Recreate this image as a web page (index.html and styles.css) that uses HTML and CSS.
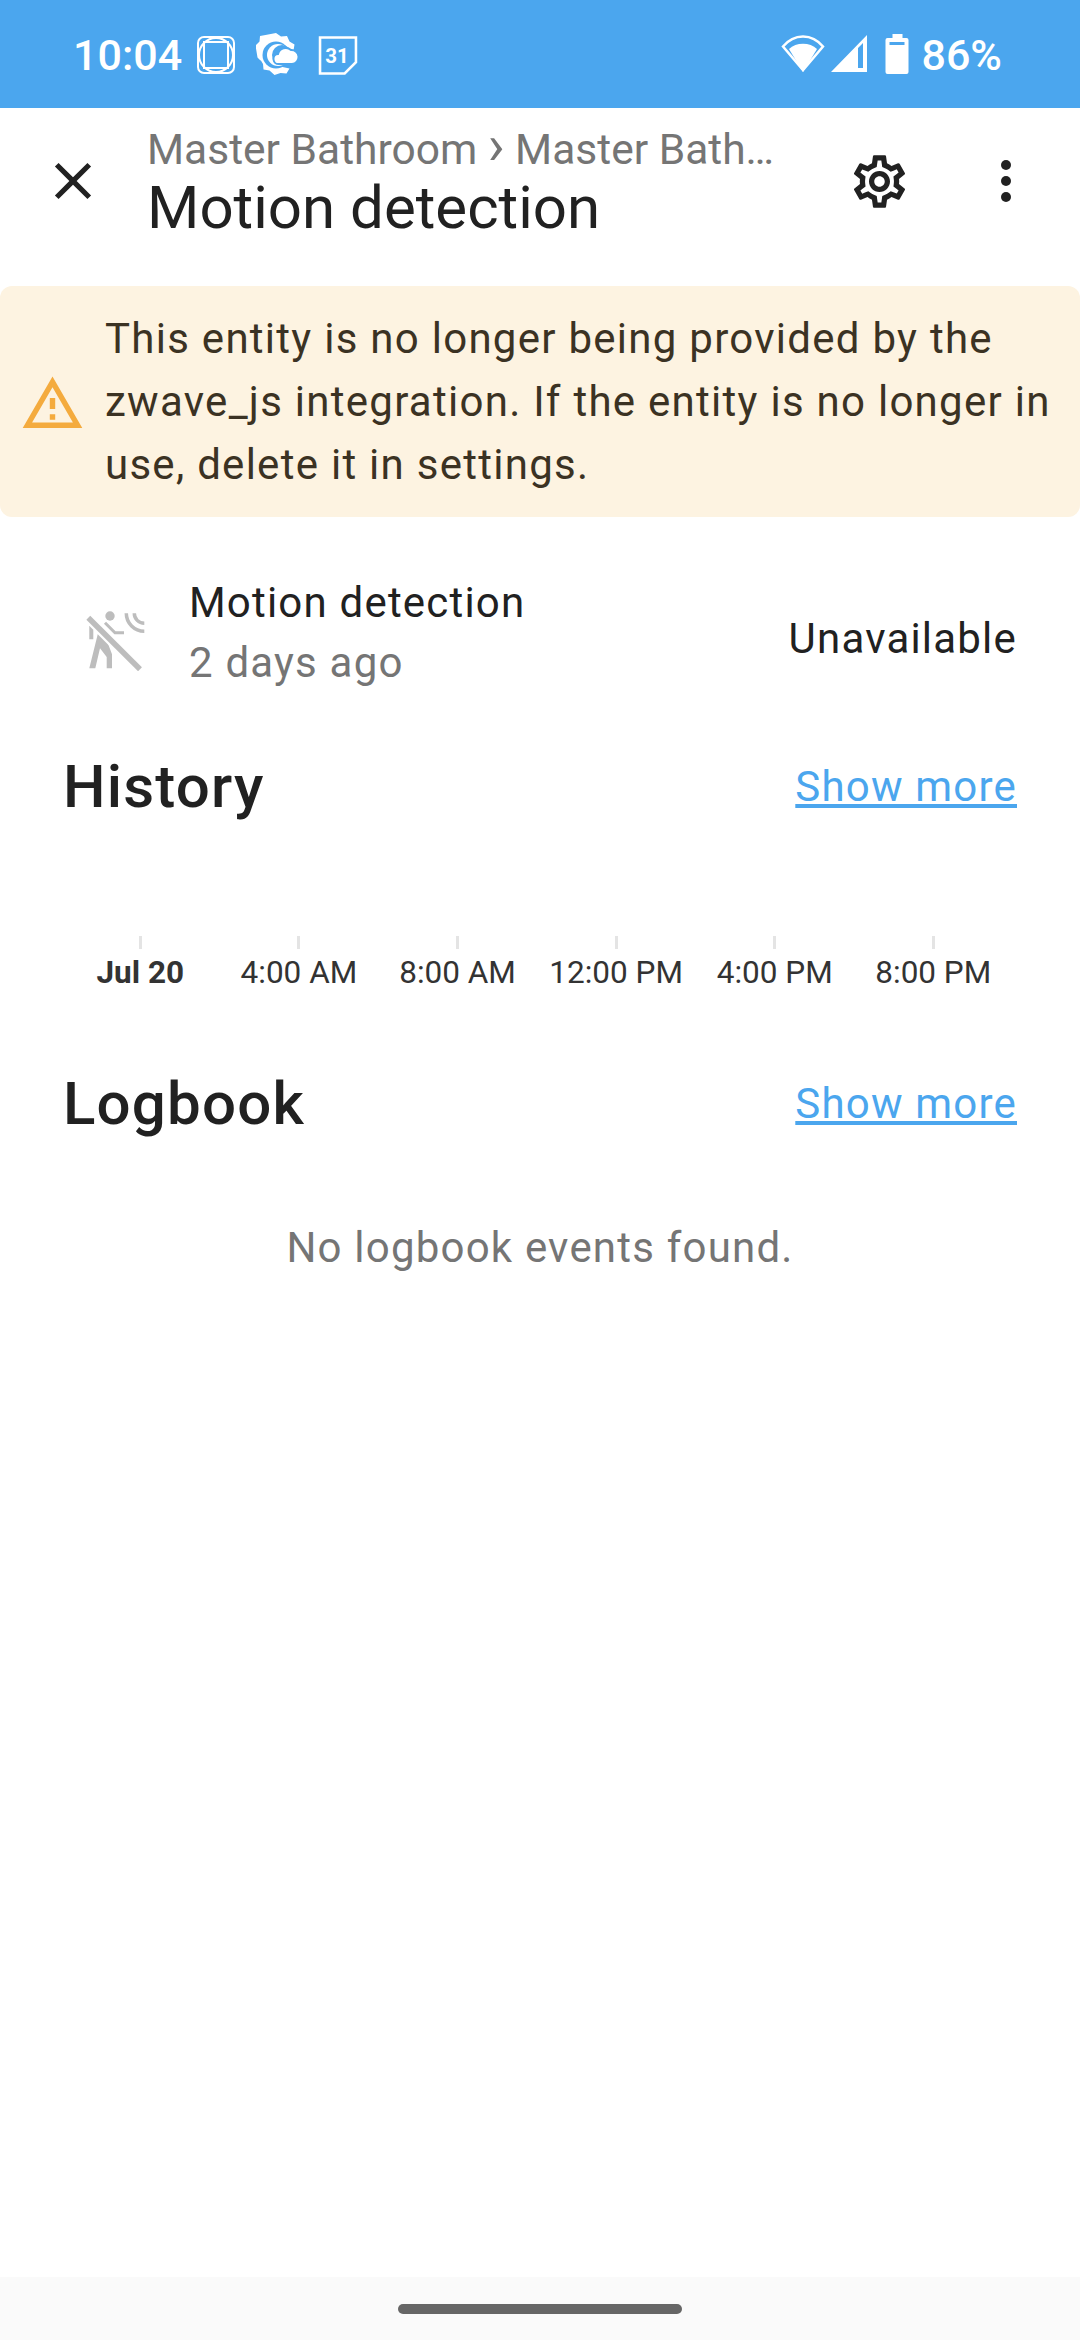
FILE: index.html
```html
<!DOCTYPE html>
<html>
<head>
<meta name="viewport" content="width=device-width, initial-scale=1.0"/>
<title>Motion detection</title>
<link rel="stylesheet" href="styles.css">
</head>
<body>
<div class="page">
  <div class="statusbar">
    <span class="clock">10:04</span>
    <svg class="st-square" width="38" height="38" viewBox="0 0 38 38" fill="none" stroke="#fff" stroke-width="2">
      <rect x="1" y="1" width="36" height="36" rx="6"/>
      <rect x="7" y="6" width="24" height="26"/>
      <circle cx="19" cy="19" r="17"/>
    </svg>
    <svg class="st-weather" width="42" height="44" viewBox="0 0 42 44">
      <path fill="#fff" d="M20 0l5 3.500 6-.5 2.500 5.500 5 3-1 6-13 0-20 10-3-3-1-6-1-6 4-4 .5-5.500 5.500-1z"/>
      <path fill="#fff" d="M5 20l-1 6 3 5 .5 5.500 6 1 5 4.500 6-2 6 .5 3-5-14-3z"/>
      <circle cx="20" cy="22" r="13.500" fill="#4ba6ee"/>
      <circle cx="22" cy="22" r="11" fill="#fff"/>
      <circle cx="26" cy="22" r="10" fill="#4ba6ee"/>
      <path fill="#fff" stroke="#4ba6ee" stroke-width="2" d="M23 31a5 5 0 0 1-1-10 8 8 0 0 1 13-4 7 7 0 0 1 1 14z"/>
    </svg>
    <svg class="st-cal" width="40" height="39" viewBox="0 0 38 38" fill="none">
      <path stroke="#fff" stroke-width="2.500" d="M1.500 1.500h35v24l-11 11h-24z"/>
      <text x="18" y="26" text-anchor="middle" class="cal-num">31</text>
    </svg>
    <span class="grow"></span>
    <svg class="st-wifi" width="44" height="38" viewBox="0 0 44 38">
      <path fill="none" stroke="#fff" stroke-width="2.500" d="M2 12.500C13 -1 31 -1 42 12.500L22 36z"/>
      <path fill="#fff" d="M8 15C15 8 29 8 36 15L22 38z"/>
    </svg>
    <svg class="st-signal" width="36" height="37" viewBox="0 0 36 37">
      <path fill="#fff" fill-rule="evenodd" d="M0 37L36 0V37zM27 13V33H32V8z"/>
    </svg>
    <svg class="st-battery" width="24" height="40" viewBox="0 0 23 40">
      <path fill="#fff" fill-rule="evenodd" d="M7 0H17V4H21a2 2 0 0 1 2 2V38a2 2 0 0 1-2 2H2a2 2 0 0 1-2-2V6a2 2 0 0 1 2-2H7zM4 8V11H19V8z"/>
    </svg>
    <span class="pct">86%</span>
  </div>

  <div class="topbar">
    <svg class="ic-close" width="62" height="62" viewBox="0 0 24 24">
      <path fill="#212121" d="M19,6.41L17.59,5L12,10.590L6.41,5L5,6.41L10.590,12L5,17.590L6.41,19L12,13.41L17.590,19L19,17.590L13.41,12L19,6.41Z"/>
    </svg>
    <div class="titles">
      <div class="crumb">Master Bathroom <span class="chev">&rsaquo;</span> Master Bath&hellip;</div>
      <div class="title">Motion detection</div>
    </div>
    <svg class="ic-cog" width="63" height="63" viewBox="0 0 24 24">
      <path fill="#212121" d="M19.43 12.98c.04-.32.07-.64.07-.98 0-.34-.03-.66-.07-.98l2.11-1.65c.19-.15.24-.42.12-.64l-2-3.46c-.09-.16-.26-.25-.44-.25-.06 0-.12.01-.17.03l-2.49 1c-.52-.4-1.08-.73-1.69-.98l-.38-2.65C14.46 2.18 14.25 2 14 2h-4c-.25 0-.46.18-.49.42l-.38 2.65c-.61.25-1.17.59-1.69.98l-2.49-1c-.06-.02-.12-.03-.18-.03-.17 0-.34.09-.43.25l-2 3.46c-.13.22-.07.49.12.64l2.11 1.65c-.04.32-.07.65-.07.98 0 .33.03.66.07.98l-2.11 1.65c-.19.15-.24.42-.12.64l2 3.46c.09.16.26.25.44.25.06 0 .12-.01.17-.03l2.49-1c.52.4 1.08.73 1.69.98l.38 2.65c.03.24.24.42.49.42h4c.25 0 .46-.18.49-.42l.38-2.65c.61-.25 1.17-.59 1.69-.98l2.49 1c.06.02.12.03.18.03.17 0 .34-.09.43-.25l2-3.46c.12-.22.07-.49-.12-.64l-2.11-1.65zm-1.98-1.71c.04.31.05.52.05.73 0 .21-.02.43-.05.73l-.14 1.13.89.7 1.08.84-.7 1.21-1.27-.51-1.04-.42-.9.68c-.43.32-.84.56-1.25.73l-1.06.43-.16 1.13-.2 1.35h-1.4l-.19-1.35-.16-1.13-1.06-.43c-.43-.18-.83-.41-1.23-.71l-.91-.7-1.06.43-1.27.51-.7-1.21 1.08-.84.89-.7-.14-1.13c-.03-.31-.05-.54-.05-.74s.02-.43.05-.73l.14-1.13-.89-.7-1.08-.84.7-1.21 1.27.51 1.04.42.9-.68c.43-.32.84-.56 1.25-.73l1.06-.43.16-1.13.2-1.35h1.39l.19 1.35.16 1.13 1.06.43c.43.18.83.41 1.23.71l.91.7 1.06-.43 1.27-.51.7 1.21-1.07.85-.89.7.14 1.13zM12 8c-2.21 0-4 1.79-4 4s1.79 4 4 4 4-1.79 4-4-1.79-4-4-4zm0 6c-1.1 0-2-.9-2-2s.9-2 2-2 2 .9 2 2-.9 2-2 2z"/>
    </svg>
    <div class="dots"><span></span><span></span><span></span></div>
  </div>

  <div class="banner">
    <svg class="ic-warn" width="65" height="65" viewBox="0 0 24 24">
      <path fill="#f4ab3e" d="M12 5.990L19.530 19H4.470L12 5.990M12 2L1 21h22L12 2zm1 14h-2v2h2v-2zm0-6h-2v4h2v-4z"/>
    </svg>
    <div class="banner-text">This entity is no longer being provided by the zwave_js integration. If the entity is no longer in use, delete it in settings.</div>
  </div>

  <div class="entity">
    <svg class="ic-motion" width="60" height="60" viewBox="0 0 60 60" fill="none">
      <circle cx="24" cy="5" r="4.700" fill="#bdbdbd"/>
      <path fill="#bdbdbd" d="M13.300 17.300L20 21.700L21.300 30.700L26 43.300V57.300H20.700V46L14 37.300L9.300 57.300H3.300L11.300 25z"/>
      <path fill="#bdbdbd" d="M3.300 15H14V19H7.300V28.300H3.300z"/>
      <path stroke="#fff" stroke-width="10" d="M0 4.400L56 60.400"/>
      <path stroke="#bdbdbd" stroke-width="5.500" d="M2.300 6.700L54 58.300"/>
      <path stroke="#bdbdbd" stroke-width="3" d="M19 11.700L29 21.700H38"/>
      <path stroke="#bdbdbd" stroke-width="3.500" d="M40.300 2.300A18 18 0 0 0 58.300 20.300M48.300 2.300A10 10 0 0 0 58.300 12.300"/>
    </svg>
    <div class="entity-text">
      <div class="entity-name">Motion detection</div>
      <div class="entity-time">2 days ago</div>
    </div>
    <div class="entity-state">Unavailable</div>
  </div>

  <div class="section-head head-history">
    <span class="section-title">History</span>
    <a class="more">Show more</a>
  </div>
  <div class="axis">
    <div class="tick bold"><i></i><span>Jul 20</span></div>
    <div class="tick"><i></i><span>4:00 AM</span></div>
    <div class="tick"><i></i><span>8:00 AM</span></div>
    <div class="tick"><i></i><span>12:00 PM</span></div>
    <div class="tick"><i></i><span>4:00 PM</span></div>
    <div class="tick"><i></i><span>8:00 PM</span></div>
  </div>

  <div class="section-head head-logbook">
    <span class="section-title">Logbook</span>
    <a class="more">Show more</a>
  </div>
  <div class="empty">No logbook events found.</div>

  <div class="navbar"><div class="pill"></div></div>
</div>
</body>
</html>
```

FILE: styles.css
```css
html, body {
    margin: 0;
    padding: 0;
    background: #fff;
}

.page {
    width: 1080px;
    height: 2340px;
    display: flex;
    flex-direction: column;
    font-family: Roboto, "Liberation Sans", sans-serif;
    color: #212121;
}

.statusbar {
    height: 108px;
    flex: none;
    background: #4ba6ee;
    display: flex;
    align-items: center;
    padding: 0 78px 0 73px;
    color: #fff;
    font-size: 43px;
    font-weight: 500;
}

.statusbar svg {
    flex: none;
}

.clock {
    line-height: 108px;
    margin-top: 2px;
}

.st-square {
    margin-left: 15px;
    margin-top: 2px;
}

.st-weather {
    margin-left: 21px;
    margin-top: 2px;
}

.st-cal {
    margin-left: 20px;
    margin-top: 2px;
}

.cal-num {
    fill: #fff;
    font-family: Roboto, sans-serif;
    font-size: 20px;
    font-weight: 700;
}

.grow {
    flex: 1;
}

.st-wifi {
    margin-top: -2px;
}

.st-signal {
    margin-left: 6px;
    margin-top: -1px;
}

.st-battery {
    margin-left: 18px;
    margin-top: 0;
}

.pct {
    margin-left: 12px;
    line-height: 108px;
    margin-top: 2px;
}

.topbar {
    height: 178px;
    flex: none;
    display: flex;
    align-items: center;
    box-sizing: border-box;
    padding-bottom: 32px;
}

.ic-close {
    margin-left: 42px;
    flex: none;
}

.titles {
    margin-left: 43px;
    width: 640px;
    flex: none;
    margin-top: 4px;
}

.crumb {
    font-size: 42.500px;
    line-height: 50px;
    color: #757575;
    white-space: nowrap;
}

.chev {
    font-size: 56px;
    line-height: 0;
}

.title {
    font-size: 60px;
    line-height: 66px;
    color: #212121;
}

.ic-cog {
    margin-left: 61px;
    flex: none;
}

.dots {
    margin-left: 90px;
    display: flex;
    flex-direction: column;
    gap: 6px;
}

.dots span {
    width: 10px;
    height: 10px;
    border-radius: 50%;
    background: #212121;
}

.banner {
    height: 231px;
    flex: none;
    background: #fdf3e1;
    border-radius: 12px;
    display: flex;
    align-items: center;
    box-sizing: border-box;
    padding-left: 20px;
}

.ic-warn {
    flex: none;
    margin-top: 3px;
}

.banner-text {
    margin-left: 20px;
    width: 950px;
    font-size: 42px;
    line-height: 63px;
    letter-spacing: 1.270px;
    color: #3b3223;
}

.entity {
    height: 124px;
    margin-top: 60px;
    flex: none;
    display: flex;
    align-items: center;
}

.ic-motion {
    margin-left: 86px;
    flex: none;
    margin-top: 4px;
}

.entity-text {
    margin-left: 43px;
    margin-top: -12px;
}

.entity-name,
.entity-time {
    font-size: 42px;
    line-height: 60px;
    letter-spacing: 1.200px;
}

.entity-time {
    color: #757575;
}

.entity-state {
    margin-left: auto;
    margin-right: 63px;
    font-size: 42px;
    letter-spacing: 1.200px;
    margin-top: -1px;
}

.section-head {
    display: flex;
    align-items: center;
    justify-content: space-between;
    padding: 0 63px 0 63px;
    flex: none;
    height: 70px;
}

.head-history {
    margin-top: 50px;
}

.head-logbook {
    margin-top: 77px;
}

.section-title {
    font-size: 60px;
    font-weight: 500;
    letter-spacing: 1.200px;
}

.more {
    font-size: 42px;
    letter-spacing: 1.200px;
    color: #4ba6ee;
    text-decoration: underline;
}

.axis {
    display: flex;
    padding-left: 61px;
    margin-top: 115px;
    flex: none;
}

.tick {
    width: 158.600px;
    display: flex;
    flex-direction: column;
    align-items: center;
    font-size: 31.500px;
    line-height: 36px;
    color: #333;
}

.tick i {
    width: 3px;
    height: 13px;
    background: #e4e4e4;
    margin-bottom: 6px;
}

.tick span {
    white-space: nowrap;
}

.tick.bold {
    font-weight: 700;
}

.empty {
    margin-top: 80px;
    text-align: center;
    font-size: 42px;
    letter-spacing: 1.200px;
    line-height: 60px;
    color: #757575;
    flex: none;
}

.navbar {
    margin-top: auto;
    height: 63px;
    flex: none;
    background: #fafafa;
    display: flex;
    justify-content: center;
    padding-top: 27px;
    box-sizing: border-box;
}

.pill {
    width: 284px;
    height: 10px;
    border-radius: 5px;
    background: #666;
}
```
